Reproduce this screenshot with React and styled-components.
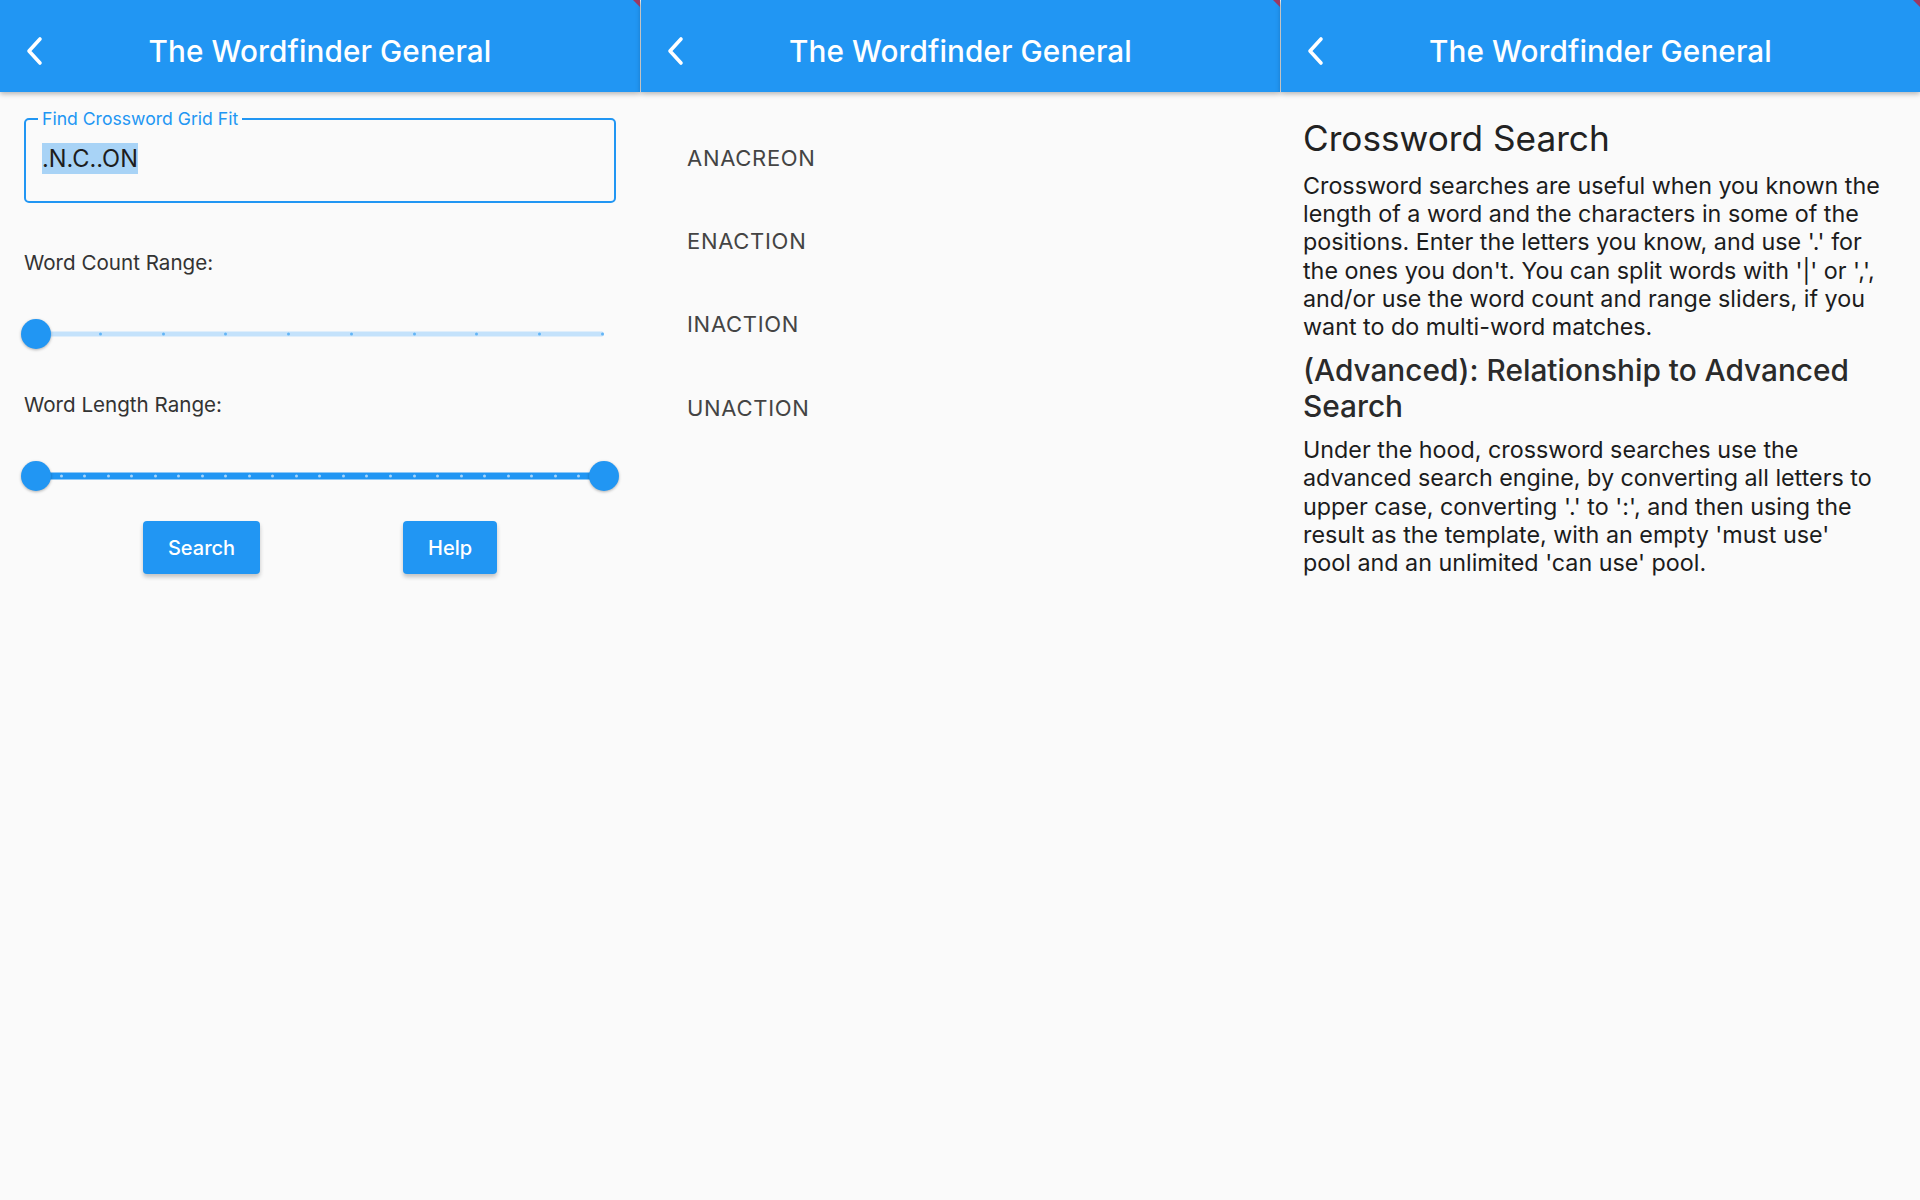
import React from 'react';
import styled, { createGlobalStyle } from 'styled-components';

const GlobalStyle = createGlobalStyle`
  html, body {
    margin: 0;
    padding: 0;
    background: #fafafa;
  }
  body {
    font-family: Inter, "Noto Sans", sans-serif;
    color: rgba(0, 0, 0, 0.87);
  }
`;

const Screen = styled.div`
  display: flex;
  width: 1920px;
  height: 1200px;
  overflow: hidden;
  background: #fafafa;
`;

const Panel = styled.section`
  position: relative;
  width: 640px;
  height: 100%;
  display: flex;
  flex-direction: column;
  background: #fafafa;
  border-left: ${p => (p.$divider ? '1px solid rgba(255,255,255,0.15)' : 'none')};
  box-sizing: border-box;
`;

const AppBar = styled.header`
  height: 92px;
  flex: none;
  box-sizing: border-box;
  padding-top: 9px;
  display: grid;
  grid-template-columns: 1fr auto 1fr;
  align-items: center;
  background: #2196f3;
  box-shadow: 0 2px 5px rgba(0, 0, 0, 0.28);
  position: relative;
  z-index: 1;
`;

const BackButton = styled.button`
  justify-self: start;
  border: none;
  background: none;
  padding: 0 0 0 25px;
  display: flex;
  align-items: center;
  cursor: pointer;
`;

const Title = styled.h1`
  margin: 0;
  font-size: 29.7px;
  font-weight: 500;
  color: #fff;
  letter-spacing: 0.1px;
`;

const DebugCorner = styled.div`
  position: absolute;
  top: 0;
  right: 0;
  width: 0;
  height: 0;
  border-top: 7px solid rgba(176, 40, 72, 0.85);
  border-left: 7px solid transparent;
  z-index: 2;
`;

const BackIcon = () => (
  <svg width="20" height="30" viewBox="0 0 20 30" fill="none">
    <path d="M15 3 L4 15 L15 27" stroke="#fff" strokeWidth="3.6" strokeLinecap="round" strokeLinejoin="round" />
  </svg>
);

/* ---------- panel 1: search form ---------- */

const Form = styled.div`
  display: flex;
  flex-direction: column;
  padding: 17px 24px 0;
`;

const Field = styled.fieldset`
  margin: 0;
  padding: 0 12px;
  border: 2px solid #2196f3;
  border-radius: 5px;
`;

const FieldLabel = styled.legend`
  padding: 0 4px;
  font-size: 17.6px;
  line-height: 20px;
  color: #2196f3;
`;

const FieldValue = styled.div`
  height: 72px;
  padding: 17px 0 0 4px;
  box-sizing: border-box;
  font-size: 23.6px;
  line-height: 26px;
  color: #1d1d1d;
`;

const Selected = styled.span`
  background: #a8d3f6;
  padding: 1px 0;
`;

const RangeLabel = styled.div`
  margin-top: ${p => p.$top}px;
  font-size: 20.6px;
  line-height: 24px;
  color: #333;
`;

const SliderBox = styled.div`
  position: relative;
  height: 30px;
  margin: ${p => p.$top}px 12px 0 12px;
`;

const Track = styled.div`
  position: absolute;
  left: 0;
  right: 0;
  top: 50%;
  height: ${p => (p.$active ? 7 : 5)}px;
  transform: translateY(-50%);
  background: ${p => (p.$active ? '#2196f3' : '#c4e2fb')};
  border-radius: 3px;
`;

const Ticks = styled.div`
  position: absolute;
  left: 0;
  right: 0;
  top: 50%;
  transform: translateY(-50%);
  display: flex;
  justify-content: space-between;
  align-items: center;
`;

const Tick = styled.span`
  width: 3px;
  height: 3px;
  border-radius: 50%;
  background: ${p => (p.$light ? '#a6d4fa' : '#64b5f6')};
`;

const Thumb = styled.span`
  position: absolute;
  top: 0;
  width: 30px;
  height: 30px;
  margin-left: -15px;
  border-radius: 50%;
  background: #2196f3;
  box-shadow: 0 1px 3px rgba(0, 0, 0, 0.3);
`;

const Slider = ({ divisions, values, top }) => {
  const range = values.length > 1;
  return (
    <SliderBox $top={top}>
      <Track $active={range} />
      <Ticks>
        {Array.from({ length: divisions + 1 }).map((_, i) => (
          <Tick key={i} $light={range} />
        ))}
      </Ticks>
      {values.map(v => (
        <Thumb key={v} style={{ left: `${v * 100}%` }} />
      ))}
    </SliderBox>
  );
};

const ButtonRow = styled.div`
  display: flex;
  justify-content: space-evenly;
  margin: 30px -24px 0;
`;

const Button = styled.button`
  height: 53px;
  padding: 0 ${p => p.$pad}px;
  border: none;
  border-radius: 4px;
  background: #2196f3;
  color: #fff;
  font-family: Inter, sans-serif;
  font-size: 20px;
  font-weight: 500;
  box-shadow: 0 3px 4px rgba(0, 0, 0, 0.22);
  cursor: pointer;
`;

/* ---------- panel 2: results ---------- */

const ResultList = styled.ul`
  list-style: none;
  margin: 0;
  padding: 24px 0 0;
`;

const ResultItem = styled.li`
  height: 83.3px;
  display: flex;
  align-items: center;
  padding-left: 46px;
  font-size: 22px;
  letter-spacing: 0.7px;
  color: #444;
`;

/* ---------- panel 3: help ---------- */

const Help = styled.article`
  padding: 24px 22px 0;
`;

const HelpTitle = styled.h2`
  margin: 0;
  font-size: 35.2px;
  line-height: 44px;
  font-weight: 400;
  color: #222;
`;

const HelpSubtitle = styled.h3`
  margin: 12px 0 0;
  font-size: 29.8px;
  line-height: 35.5px;
  font-weight: 500;
  color: #2a2a2a;
`;

const HelpText = styled.p`
  margin: 12px 0 0;
  font-size: 23.3px;
  line-height: 28.2px;
  color: #1c1c1c;
`;

const Line = styled.span`
  display: block;
  white-space: nowrap;
`;

const intro = [
  'Crossword searches are useful when you known the',
  'length of a word and the characters in some of the',
  "positions. Enter the letters you know, and use '.' for",
  "the ones you don't. You can split words with '|' or ',',",
  'and/or use the word count and range sliders, if you',
  'want to do multi-word matches.',
];

const advanced = [
  'Under the hood, crossword searches use the',
  'advanced search engine, by converting all letters to',
  "upper case, converting '.' to ':', and then using the",
  "result as the template, with an empty 'must use'",
  "pool and an unlimited 'can use' pool.",
];

const results = ['ANACREON', 'ENACTION', 'INACTION', 'UNACTION'];

const Bar = () => (
  <AppBar>
    <BackButton aria-label="Back">
      <BackIcon />
    </BackButton>
    <Title>The Wordfinder General</Title>
  </AppBar>
);

export default function App() {
  return (
    <>
      <GlobalStyle />
      <Screen>
        <Panel>
          <Bar />
          <DebugCorner />
          <Form>
            <Field>
              <FieldLabel>Find Crossword Grid Fit</FieldLabel>
              <FieldValue>
                <Selected>.N.C..ON</Selected>
              </FieldValue>
            </Field>
            <RangeLabel $top={48}>Word Count Range:</RangeLabel>
            <Slider divisions={9} values={[0]} top={44} />
            <RangeLabel $top={44}>Word Length Range:</RangeLabel>
            <Slider divisions={24} values={[0, 1]} top={44} />
            <ButtonRow>
              <Button $pad={25}>Search</Button>
              <Button $pad={25}>Help</Button>
            </ButtonRow>
          </Form>
        </Panel>

        <Panel $divider>
          <Bar />
          <DebugCorner />
          <ResultList>
            {results.map(word => (
              <ResultItem key={word}>{word}</ResultItem>
            ))}
          </ResultList>
        </Panel>

        <Panel $divider>
          <Bar />
          <DebugCorner />
          <Help>
            <HelpTitle>Crossword Search</HelpTitle>
            <HelpText>
              {intro.map(l => (
                <Line key={l}>{l}</Line>
              ))}
            </HelpText>
            <HelpSubtitle>
              <Line>(Advanced): Relationship to Advanced</Line>
              <Line>Search</Line>
            </HelpSubtitle>
            <HelpText>
              {advanced.map(l => (
                <Line key={l}>{l}</Line>
              ))}
            </HelpText>
          </Help>
        </Panel>
      </Screen>
    </>
  );
}
